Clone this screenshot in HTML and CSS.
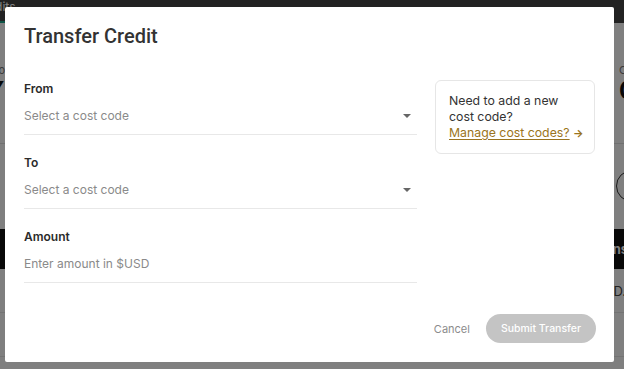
FILE: index.html
```html
<!DOCTYPE html>
<html lang="en">
<head>
<meta charset="utf-8">
<title>Transfer Credit</title>
<link rel="stylesheet" href="styles.css">
</head>
<body>
<div class="page">
  <nav class="topnav">
    <span class="tab tab-active">Credits</span>
  </nav>
  <section class="stats">
    <div class="stat stat-left">
      <div class="stat-label">Info</div>
      <div class="stat-value">▼</div>
    </div>
    <div class="stat stat-right">
      <div class="stat-label">Cost</div>
      <div class="stat-value">00</div>
    </div>
  </section>
  <div class="rule"></div>
  <div class="circle-row"><span class="circle"></span></div>
  <div class="table-head"><span class="th-right">ns</span></div>
  <div class="table-row"><span class="td-right">D.0</span></div>
  <div class="table-row"></div>
</div>

<div class="overlay">
  <div class="modal" role="dialog" aria-labelledby="modal-title">
    <h2 class="modal-title" id="modal-title">Transfer Credit</h2>
    <div class="modal-body">
      <div class="fields">
        <div class="field">
          <label class="field-label">From</label>
          <div class="select">
            <span class="placeholder">Select a cost code</span>
            <span class="caret"></span>
          </div>
        </div>
        <div class="field">
          <label class="field-label">To</label>
          <div class="select">
            <span class="placeholder">Select a cost code</span>
            <span class="caret"></span>
          </div>
        </div>
        <div class="field">
          <label class="field-label">Amount</label>
          <div class="select">
            <span class="placeholder">Enter amount in $USD</span>
          </div>
        </div>
      </div>
      <aside class="help-card">
        <p class="help-text">Need to add a new cost code?</p>
        <p class="help-link-line"><a class="help-link" href="#">Manage cost codes?</a> <span class="help-arrow">→</span></p>
      </aside>
    </div>
    <div class="modal-footer">
      <button class="btn-cancel" type="button">Cancel</button>
      <button class="btn-submit" type="button">Submit Transfer</button>
    </div>
  </div>
</div>
</body>
</html>
```

FILE: styles.css
```css
* { box-sizing: border-box; }

html, body {
  margin: 0;
  padding: 0;
  width: 624px;
  height: 369px;
  overflow: hidden;
}

body {
  background: #ffffff;
  font-family: Inter, "Noto Sans", sans-serif;
  color: #333;
}

/* ---------- background page ---------- */
.page {
  width: 624px;
  height: 369px;
  overflow: hidden;
}

.topnav {
  height: 23px;
  background: #444;
  display: flex;
  align-items: flex-end;
}

.tab {
  font-size: 12px;
  line-height: 14px;
  color: #ffffff;
  padding-bottom: 7px;
  margin-left: -25px;
  border-bottom: 2px solid #1aa68a;
}

.stats {
  display: flex;
  justify-content: space-between;
  margin: 40px -60px 0 -60px;
}

.stat { width: 65px; }
.stat-left { text-align: right; }
.stat-right { text-align: left; }

.stat-label {
  font-size: 11px;
  line-height: 14px;
  color: #777;
}

.stat-value {
  font-size: 24px;
  line-height: 28px;
  font-weight: 700;
  color: #111;
}

.rule {
  margin-top: 38px;
  height: 1px;
  background: #e0e0e0;
}

.circle-row {
  display: flex;
  justify-content: flex-end;
  margin-top: 26px;
  margin-right: -24px;
}

.circle {
  width: 32px;
  height: 32px;
  border: 1.5px solid #333;
  border-radius: 50%;
}

.table-head {
  margin-top: 27px;
  height: 40px;
  background: #111;
  display: flex;
  align-items: center;
  justify-content: flex-end;
  margin-right: -4px;
}

.th-right {
  font-size: 13px;
  font-weight: 700;
  color: #fff;
}

.table-row {
  height: 44px;
  border-bottom: 1px solid #e6e6e6;
  display: flex;
  align-items: center;
  justify-content: flex-end;
  margin-right: -10px;
}

.td-right {
  font-size: 13px;
  color: #444;
}

/* ---------- overlay & modal ---------- */
.overlay {
  position: fixed;
  inset: 0;
  background: rgba(0, 0, 0, 0.5);
  padding: 7px 10px 7px 5px;
}

.modal {
  width: 609px;
  height: 355px;
  background: #fff;
  border-radius: 2px;
  padding: 17px 18px 19px 19px;
  display: flex;
  flex-direction: column;
}

.modal-title {
  margin: 0;
  font-family: Roboto, Inter, sans-serif;
  font-size: 20px;
  line-height: 24px;
  font-weight: 500;
  color: #333;
}

.modal-body {
  display: flex;
  gap: 18px;
  margin-top: 33px;
}

.fields {
  width: 393px;
  display: flex;
  flex-direction: column;
  gap: 20px;
}

.field {
  display: flex;
  flex-direction: column;
  gap: 11px;
}

.field-label {
  font-size: 12px;
  line-height: 16px;
  font-weight: 600;
  color: #2b2b2b;
}

.select {
  display: flex;
  align-items: center;
  justify-content: space-between;
  padding: 0 6px 10px 0;
  border-bottom: 1px solid #e8e8e8;
}

.placeholder {
  font-size: 12px;
  line-height: 16px;
  color: #8a8a8a;
}

.caret {
  width: 0;
  height: 0;
  border-left: 4px solid transparent;
  border-right: 4px solid transparent;
  border-top: 4px solid #666;
}

.help-card {
  width: 160px;
  align-self: flex-start;
  margin-top: -1px;
  border: 1px solid #e6e6e6;
  border-radius: 6px;
  padding: 12px 10px 12px 13px;
}

.help-text,
.help-link-line {
  margin: 0;
  font-size: 12.3px;
  line-height: 16px;
  color: #333;
}

.help-link-line { white-space: nowrap; }

.help-link {
  color: #9a7420;
  text-decoration: underline;
  text-underline-offset: 2px;
}

.help-arrow {
  color: #9a7420;
  font-size: 11px;
  font-weight: 700;
}

.modal-footer {
  margin-top: auto;
  display: flex;
  justify-content: flex-end;
  align-items: center;
  gap: 16px;
}

.btn-cancel {
  border: 0;
  background: none;
  padding: 0;
  font-family: Inter, "Noto Sans", sans-serif;
  font-size: 11px;
  color: #8c8c8c;
}

.btn-submit {
  border: 0;
  height: 29px;
  padding: 0 15px;
  border-radius: 15px;
  background: #c4c4c4;
  color: #fff;
  font-family: Inter, "Noto Sans", sans-serif;
  font-size: 10.5px;
  font-weight: 500;
}
```
